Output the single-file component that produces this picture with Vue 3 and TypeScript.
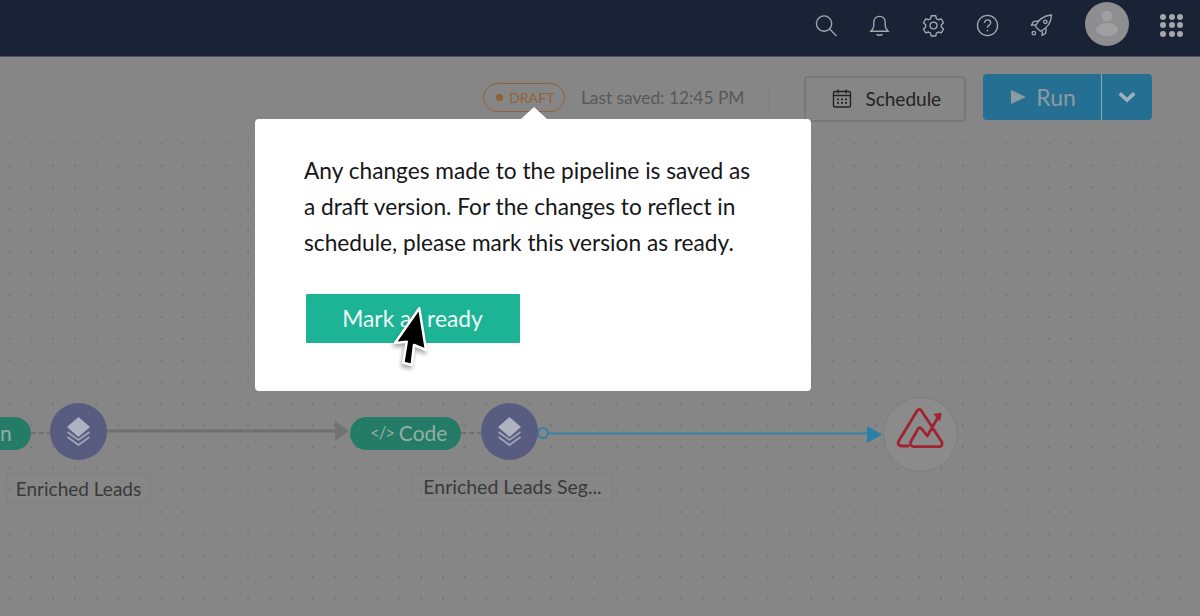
<script setup lang="ts">
const dotCount = 9
const dots = Array.from({ length: dotCount }, (_, i) => i)
const message = [
  'Any changes made to the pipeline is saved as',
  'a draft version. For the changes to reflect in',
  'schedule, please mark this version as ready.',
]
</script>

<template>
  <div class="page">
    <header class="topbar">
      <svg class="ico" viewBox="0 0 24 24"><circle cx="10.500" cy="10" r="8" /><path d="M16.500 16l7 7" /></svg>
      <svg class="ico" viewBox="0 0 24 24"><path d="M12 2.500c-4 0-6 3-6 6.500v3.500c0 2-1 3.300-3 5.500h18c-2-2.200-3-3.500-3-5.500V9c0-3.500-2-6.500-6-6.500z" /><path d="M9 21c.8 1.600 5.200 1.600 6 0" /></svg>
      <svg class="ico" viewBox="0 0 24 24"><path d="M9.700 1.800h4.600l.7 3 2.100 1.200 3-.9 2.300 4-2.200 2.100v2.400l2.200 2.100-2.300 4-3-.9-2.100 1.200-.7 3H9.700l-.7-3-2.100-1.200-3 .9-2.300-4 2.200-2.100v-2.400L1.600 9.100l2.300-4 3 .9L9 4.800z" stroke-linejoin="round" /><circle cx="12" cy="12" r="3.600" /></svg>
      <svg class="ico" viewBox="0 0 24 24"><circle cx="12" cy="12" r="10.500" /><path d="M8.800 9.300c0-2 1.500-3.100 3.300-3.100 1.900 0 3.200 1.100 3.200 2.800 0 2.600-3.300 2.600-3.300 5.300" /><circle class="solid" cx="12" cy="17.300" r=".9" /></svg>
      <svg class="ico" viewBox="0 0 24 24"><path d="M8 15.500l-2.500-2.800c3-6.500 9-11 17-11.700-.6 8-5 14-11.500 17z" stroke-linejoin="round" /><path d="M6 11l-4.500.8 2-3.800 5-.8M13 18l-.5 4.500 3.800-2.500.6-5" stroke-linejoin="round" /><circle cx="16" cy="8.200" r="1.800" /><circle cx="4" cy="20" r="1.800" /></svg>
      <div class="avatar">
        <svg viewBox="0 0 44 44"><circle cx="22" cy="14" r="5.500" /><ellipse cx="22" cy="27.500" rx="11" ry="6.500" /></svg>
      </div>
      <div class="apps"><i v-for="d in dots" :key="d" /></div>
    </header>

    <section class="toolbar">
      <span class="draft"><i class="draft-dot" />DRAFT</span>
      <span class="saved">Last saved: 12:45 PM</span>
      <span class="sep" />
      <button class="schedule">
        <svg viewBox="0 0 20 20"><rect x="1.500" y="3" width="17" height="15.500" rx="1.500" /><path d="M1.500 7h17M6 1v4M14 1v4" /><path class="cells" d="M5 10h2v1.800H5zM9 10h2v1.800H9zM13 10h2v1.800h-2zM5 13.500h2v1.800H5zM9 13.500h2v1.800H9zM13 13.500h2v1.800h-2z" /></svg>
        Schedule
      </button>
      <div class="run">
        <span class="run-main"><i class="play" />Run</span>
        <span class="run-more"><svg viewBox="0 0 16 10"><path d="M2 2l6 5.500L14 2" /></svg></span>
      </div>
    </section>

    <main class="canvas">
      <svg class="wires" viewBox="0 0 1200 481">
        <path class="dash" d="M31 298h19" />
        <path class="grey" d="M106 296h230" />
        <path class="grey-tip" d="M335 286l14 10-14 10z" />
        <path class="dash" d="M461 298h20" />
        <circle class="ring" cx="543" cy="298" r="5" />
        <path class="blue" d="M548 298.500h320" />
        <path class="blue-tip" d="M867 291l15 8.500-15 8.500z" />
      </svg>

      <div class="pill pill-cut">n</div>
      <div class="store store-a"><svg viewBox="0 0 23 29"><path class="top" d="M11.500 0L23 10 11.500 20 0 10z" /><path d="M.5 15l11 8 11-8M.5 20l11 8 11-8" /></svg></div>
      <div class="label label-a">Enriched Leads</div>

      <div class="pill pill-code"><span class="code-ico">&lt;/&gt;</span> Code</div>
      <div class="store store-b"><svg viewBox="0 0 23 29"><path class="top" d="M11.500 0L23 10 11.500 20 0 10z" /><path d="M.5 15l11 8 11-8M.5 20l11 8 11-8" /></svg></div>
      <div class="label label-b">Enriched Leads Seg...</div>

      <div class="target">
        <svg viewBox="0 0 73 73"><path d="M24.300 48h-6.600c-2.600 0-4.300-2.200-3.400-4.300L33 13c1-2.300 3.300-2.300 4.600 0L57.700 43.700c1.300 2.500 0 5-2.400 5H30c-2.800 0-4.500-2.700-3.300-5L34 31c.7-1.600 2.300-1.800 3.400-.4l5.900 7.400L55.300 17" /><path class="tip" d="M49.300 16l8.400-1.300-1.700 9z" /></svg>
      </div>
    </main>

    <aside class="popover">
      <span class="caret" />
      <p v-for="line in message" :key="line">{{ line }}</p>
      <button class="ready">Mark as ready</button>
    </aside>

    <svg class="cursor" viewBox="0 0 50 80"><path d="M29.300 6.300L36 48l-12-5-2.300 20-8.400-2.300 3.400-21L5 41z" /></svg>
  </div>
</template>

<style>
html, body { margin: 0; background: #878687; }
</style>

<style scoped>
.page {
  position: relative;
  display: flex;
  flex-direction: column;
  width: 1200px;
  height: 616px;
  overflow: hidden;
  background: #878687;
  font-family: Lato, "Liberation Sans", sans-serif;
  color: #2f2f30;
}
.topbar {
  display: flex;
  align-items: center;
  justify-content: flex-end;
  flex: none;
  box-sizing: border-box;
  height: 57px;
  padding: 0 17px 6px 0;
  background: #1a2336;
  border-bottom: 1px solid #4b5263;
}
.ico {
  width: 23px;
  height: 23px;
  margin-right: 31px;
  fill: none;
  stroke: #a4a7ae;
  stroke-width: 1.400;
}
.ico .solid { fill: #a4a7ae; stroke: none; }
.avatar {
  width: 44px;
  height: 44px;
  margin: -2px 31px 0 1px;
  border-radius: 50%;
  background: #8e8e90;
  overflow: hidden;
}
.avatar svg { display: block; fill: #a0a0a1; }
.apps {
  display: grid;
  grid-template-columns: repeat(3, 6px);
  gap: 2.500px;
}
.apps i { width: 6px; height: 6px; border-radius: 50%; background: #a5a6ab; }
.toolbar {
  display: flex;
  align-items: flex-start;
  flex: none;
  box-sizing: border-box;
  height: 78px;
  padding: 0 48px 0 483px;
}
.draft {
  display: flex;
  align-items: center;
  box-sizing: border-box;
  width: 82px;
  height: 29px;
  margin-top: 26px;
  padding-left: 12px;
  border: 1px solid #8f6237;
  border-radius: 15px;
  color: #8f6237;
  font-size: 14px;
  letter-spacing: .1px;
}
.draft-dot {
  width: 7px;
  height: 7px;
  margin-right: 6px;
  border-radius: 50%;
  background: #8f6237;
}
.saved {
  margin: 30px 0 0 16px;
  font-size: 17.350px;
  line-height: 21px;
  color: #585859;
  white-space: nowrap;
}
.sep { width: 1px; height: 26px; margin: 28px 34px 0 25px; background: #7c7c7d; }
.schedule {
  display: flex;
  align-items: center;
  box-sizing: border-box;
  width: 162px;
  height: 46px;
  padding: 0 0 2px 26px;
  margin-top: 19px;
  border: 2px solid #787879;
  border-radius: 4px;
  background: #878687;
  color: #222223;
  font: 19px Lato, sans-serif;
}
.schedule svg {
  width: 20px;
  height: 21px;
  margin-right: 13px;
  fill: none;
  stroke: #222223;
  stroke-width: 1.400;
}
.schedule .cells { fill: #222223; stroke: none; }
.run {
  display: flex;
  width: 169px;
  height: 46px;
  margin: 17px 0 0 17px;
  border-radius: 4px;
  overflow: hidden;
  background: #256f92;
  color: #8b9aa3;
  font-size: 23px;
}
.run-main {
  display: flex;
  align-items: center;
  box-sizing: border-box;
  width: 119px;
  padding-left: 28px;
  border-right: 1px solid #83a9bb;
}
.play {
  width: 0;
  height: 0;
  margin-right: 10px;
  border-left: 15px solid #8b9aa3;
  border-top: 7px solid transparent;
  border-bottom: 7px solid transparent;
}
.run-more { display: flex; flex: 1; align-items: center; justify-content: center; }
.run-more svg { width: 20px; height: 12px; fill: none; stroke: #9db1bb; stroke-width: 3; }
.canvas {
  position: relative;
  flex: 1;
  background-color: #868687;
  background-image: radial-gradient(circle, #777779 1.100px, transparent 1.600px);
  background-size: 21.670px 21.670px;
  background-position: -1px -2px;
}
.wires { position: absolute; inset: 0; width: 1200px; height: 481px; fill: none; }
.dash { stroke: #5c5c5d; stroke-width: 1; stroke-dasharray: 5 3; }
.grey { stroke: #6f6f70; stroke-width: 3; }
.grey-tip { fill: #737374; }
.blue { stroke: #3583a5; stroke-width: 2; }
.blue-tip { fill: #2a80a5; }
.ring { stroke: #2c81a6; stroke-width: 2; }
.pill {
  position: absolute;
  display: flex;
  align-items: center;
  box-sizing: border-box;
  height: 33px;
  top: 282px;
  padding-bottom: 3px;
  background: #247b66;
  color: #94afa6;
  font-size: 21px;
  white-space: nowrap;
}
.pill-cut { left: -20px; width: 51px; padding-left: 20px; border-radius: 0 17px 17px 0; }
.pill-code { left: 350px; width: 111px; padding-left: 20px; border-radius: 17px; gap: 5px; }
.code-ico { font-size: 17px; letter-spacing: -1.200px; }
.store {
  position: absolute;
  top: 268px;
  display: flex;
  align-items: center;
  justify-content: center;
  width: 57px;
  height: 57px;
  border-radius: 50%;
  background: #585c80;
}
.store svg { width: 23px; height: 29px; fill: none; stroke: #a2a5b5; stroke-width: 1.800; }
.store .top { fill: #b0b2bf; stroke: none; }
.store-a { left: 50px; }
.store-b { left: 481px; }
.label {
  position: absolute;
  top: 338px;
  display: flex;
  align-items: center;
  justify-content: center;
  box-sizing: border-box;
  border: 1px solid #7f7f80;
  border-radius: 3px;
  color: #39393a;
  font-size: 19px;
  white-space: nowrap;
}
.label-a { left: 6px; width: 145px; height: 30px; }
.label-b { left: 412px; width: 201px; height: 28px; padding-bottom: 2px; font-size: 19.500px; }
.target {
  position: absolute;
  left: 883px;
  top: 262px;
  width: 73px;
  height: 73px;
  border: 1px solid #7e7e7f;
  border-radius: 50%;
  background: #8b8b8c;
}
.target svg { display: block; width: 73px; height: 73px; fill: none; stroke: #a02330; stroke-width: 2.800; stroke-linejoin: round; stroke-linecap: round; }
.target .tip { fill: #a02330; stroke: none; }
.popover {
  position: absolute;
  left: 255px;
  top: 119px;
  box-sizing: border-box;
  width: 556px;
  height: 272px;
  padding: 34px 20px 0 49px;
  background: #fff;
  border-radius: 4px;
  color: #161617;
}
.popover p { margin: 0; font-size: 22.700px; line-height: 36px; white-space: nowrap; }
.caret {
  position: absolute;
  left: 266px;
  top: -12px;
  width: 0;
  height: 0;
  border-left: 13px solid transparent;
  border-right: 13px solid transparent;
  border-bottom: 12px solid #fff;
}
.ready {
  display: block;
  width: 214px;
  height: 49px;
  margin: 33px 0 0 1.500px;
  padding: 0 0 2px;
  border: 0;
  border-radius: 1px;
  background: #1db495;
  color: #f0fbf8;
  font: 22.800px Lato, sans-serif;
}
.cursor {
  position: absolute;
  left: 390px;
  top: 302px;
  width: 50px;
  height: 80px;
  fill: #000;
  stroke: #fff;
  stroke-width: 2.500;
  stroke-linejoin: round;
  filter: drop-shadow(-1px 3px 2px rgba(0, 0, 0, .35));
}
</style>
